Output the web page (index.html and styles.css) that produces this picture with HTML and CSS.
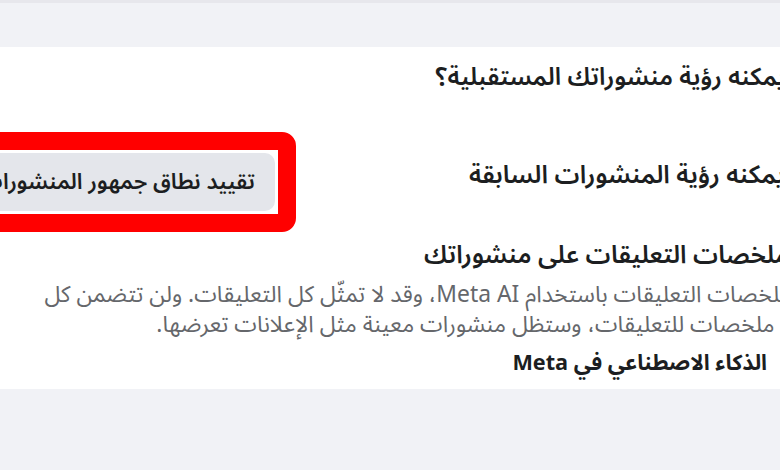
FILE: index.html
```html
<!DOCTYPE html>
<html lang="ar" dir="rtl">
<head>
<meta charset="utf-8">
<link rel="stylesheet" href="styles.css">
</head>
<body>
<div class="topline"></div>
<div class="band"></div>
<main class="panel">
  <h2 class="title t1">من يمكنه رؤية منشوراتك المستقبلية؟</h2>
  <div class="row">
    <div class="label">من يمكنه رؤية المنشورات السابقة</div>
    <div class="btnzone">
      <div class="mark">
        <button class="btn">تقييد نطاق جمهور المنشورات السابقة</button>
      </div>
    </div>
  </div>
  <h2 class="title t3">ملخصات التعليقات على منشوراتك</h2>
  <p class="desc">
    <span class="dl d1">ستُنشأ ملخصات التعليقات باستخدام Meta AI، وقد لا تمثّل كل التعليقات. ولن تتضمن كل</span>
    <span class="dl d2">المنشورات ملخصات للتعليقات، وستظل منشورات معينة مثل الإعلانات تعرضها.</span>
  </p>
  <a class="more">الذكاء الاصطناعي في Meta</a>
</main>
</body>
</html>
```
FILE: styles.css
```css
html, body {
  margin: 0;
  padding: 0;
}
body {
  width: 780px;
  height: 470px;
  overflow: hidden;
  background: #f1f2f6;
  font-family: "Noto Sans Arabic", "DejaVu Sans", sans-serif;
  color: #1c1e21;
}
.topline {
  height: 3px;
  background: #e7e7ec;
}
.band {
  height: 44px;
}
.panel {
  background: #ffffff;
  height: 342px;
  display: flex;
  flex-direction: column;
  align-items: flex-start;
  white-space: nowrap;
}
.title {
  margin: 0;
  font-size: 24.5px;
  font-weight: 600;
  line-height: 30px;
}
.t1 {
  margin-top: 15px;
  margin-right: -45px;
}
.row {
  align-self: stretch;
  margin-top: 40px;
  display: flex;
  align-items: flex-start;
}
.label {
  font-size: 25px;
  font-weight: 600;
  line-height: 30px;
  margin-top: 28px;
  margin-right: -45px;
}
.btnzone {
  width: 296px;
  flex-shrink: 0;
  margin-right: auto;
  display: flex;
  justify-content: flex-start;
}
.mark {
  flex-shrink: 0;
  border: 18px solid #ff0000;
  border-radius: 14px;
  padding: 3px;
  background: #fff;
}
.btn {
  display: block;
  border: 0;
  background: #e4e6eb;
  border-radius: 10px;
  height: 58px;
  padding: 0 20px;
  font-family: inherit;
  font-size: 22.1px;
  font-weight: 600;
  color: #1c1e21;
  white-space: nowrap;
}
.t3 {
  font-size: 25px;
  margin-top: 8px;
  margin-right: -9px;
}
.desc {
  margin: 10px -78px 0 0;
  font-size: 22.85px;
  line-height: 30px;
  color: #65676b;
}
.dl {
  display: block;
}
.d2 {
  margin-right: -21px;
}
.more {
  font-size: 21.7px;
  font-weight: 700;
  line-height: 30px;
  margin-top: 8px;
  margin-right: 13px;
  color: #1c1e21;
}
```
